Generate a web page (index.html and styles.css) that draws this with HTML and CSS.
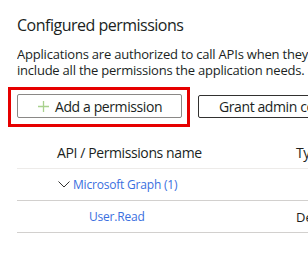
FILE: index.html
```html
<!DOCTYPE html>
<html lang="en">
<head>
<meta charset="utf-8">
<link rel="stylesheet" href="styles.css">
</head>
<body>
<main class="page">
  <h2 class="title">Configured permissions</h2>
  <p class="desc"><span class="line">Applications are authorized to call APIs when they are granted permissions by users/admins as part of the consent process.</span><span class="line">include all the permissions the application needs. <a class="learn" href="#">Learn more</a></span></p>
  <div class="toolbar">
    <div class="highlight">
      <button class="btn btn-add" type="button">
        <svg class="plus" width="11" height="11" viewBox="0 0 11 11" aria-hidden="true"><path d="M5.5 0v11M0 5.5h11" stroke="#a9d18e" stroke-width="1.3" fill="none"/></svg>
        <span>Add a permission</span>
      </button>
    </div>
    <button class="btn btn-grant" type="button">Grant admin consent for Default Directory</button>
  </div>
  <div class="grid">
    <div class="row head">
      <div class="cell name">API / Permissions name</div>
      <div class="cell type">Type</div>
    </div>
    <div class="row">
      <div class="cell name group">
        <svg class="chev" width="12" height="7" viewBox="0 0 12 7" aria-hidden="true"><path d="M0.5 0.5l5.5 5.5l5.5-5.5" stroke="#323130" stroke-width="1" fill="none"/></svg>
        <a class="link" href="#">Microsoft Graph (1)</a>
      </div>
      <div class="cell type"></div>
    </div>
    <div class="row">
      <div class="cell name perm"><a class="link" href="#">User.Read</a></div>
      <div class="cell type">Delegated</div>
    </div>
  </div>
</main>
</body>
</html>
```
FILE: styles.css
```css
html, body {
  margin: 0;
  background: #fff;
}
body {
  font-family: "Open Sans", "Noto Sans", sans-serif;
  color: #201f1e;
  overflow: hidden;
  width: 308px;
  height: 272px;
}
.page {
  padding: 14px 0 0 17px;
  overflow: hidden;
}
.title {
  margin: 0;
  font-size: 16px;
  font-weight: 400;
  line-height: 22px;
  letter-spacing: -0.5px;
  white-space: nowrap;
}
.desc {
  margin: 10px 0 0;
  font-size: 13px;
  line-height: 16px;
  white-space: nowrap;
  overflow: hidden;
}
.line {
  display: block;
}
.line:first-child {
  letter-spacing: -0.2px;
}
.line:last-child {
  letter-spacing: -0.22px;
}
.learn {
  color: #0078d4;
  text-decoration: none;
  outline: 1px dotted #0078d4;
  margin-left: 2px;
}
.toolbar {
  display: flex;
  align-items: flex-start;
  gap: 8px;
  margin: 9px 0 0 -9px;
}
.highlight {
  border: 3px solid #e60000;
  padding: 4px 5px 6px 6px;
}
.btn {
  font-family: inherit;
  font-size: 14px;
  color: #201f1e;
  background: #fff;
  height: 24px;
  border-radius: 2px;
  display: flex;
  align-items: center;
  white-space: nowrap;
  letter-spacing: -0.4px;
  cursor: pointer;
}
.btn-add {
  width: 165px;
  border: 1px solid #8a8886;
  padding: 0 0 0 20px;
  gap: 6px;
}
.btn-grant {
  margin-top: 8px;
  height: 23px;
  border: 1px solid #323130;
  padding: 0 20px;
}
.grid {
  margin-top: 10px;
}
.row {
  display: flex;
  height: 31px;
  align-items: center;
  border-bottom: 1px solid #d2d0ce;
  font-size: 13px;
  white-space: nowrap;
}
.row.head {
  border-bottom-color: #edebe9;
  font-size: 14px;
  letter-spacing: -0.4px;
}
.cell.name {
  width: 239px;
  padding-left: 40px;
  flex: none;
  display: flex;
  align-items: center;
}
.cell.type {
  flex: none;
}
.group {
  gap: 3px;
}
.chev {
  margin-left: 1px;
}
.perm {
  padding-left: 72px !important;
  width: 207px !important;
}
.link {
  color: #3a6fe0;
  text-decoration: none;
  font-size: 12px;
  letter-spacing: -0.2px;
}
```
